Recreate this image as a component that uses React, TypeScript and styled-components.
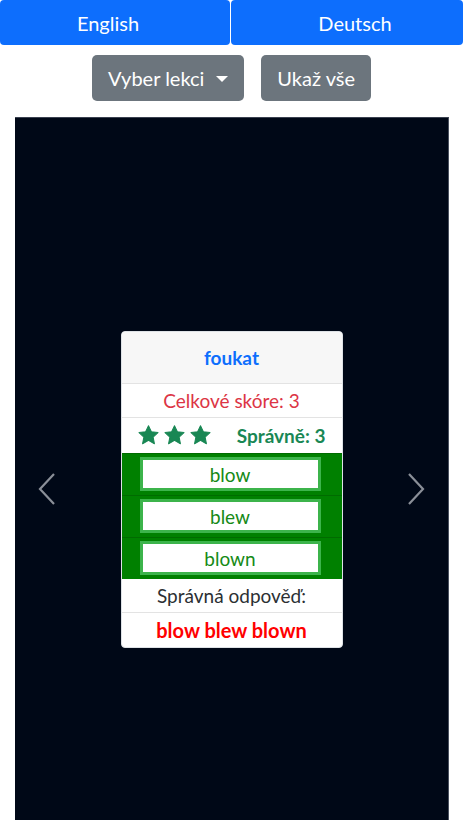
import React from "react";
import styled, { createGlobalStyle } from "styled-components";

const GlobalStyle = createGlobalStyle`
  body {
    margin: 0;
    background: #fff;
    font-family: Lato, "Noto Sans", sans-serif;
    color: #212529;
  }
  * { box-sizing: border-box; }
`;

const Page = styled.div`
  width: 463px;
  height: 820px;
  overflow: hidden;
  display: flex;
  flex-direction: column;
`;

const LangBar = styled.div`
  display: flex;
  gap: 1px;
`;

const LangButton = styled.button<{ $shift: number }>`
  flex: 1;
  height: 45px;
  border: none;
  border-radius: 4px;
  background: #0d6efd;
  color: #fff;
  font-family: inherit;
  font-size: 20px;
  padding: 0 0 0 ${({ $shift }) => ($shift > 0 ? $shift : 0)}px;
  padding-right: ${({ $shift }) => ($shift < 0 ? -$shift : 0)}px;
`;

const Toolbar = styled.div`
  display: flex;
  justify-content: center;
  gap: 17px;
  margin: 10px 0 16px;
`;

const GrayButton = styled.button`
  height: 46px;
  padding: 0 16px;
  border: none;
  border-radius: 5px;
  background: #6c757d;
  color: #fff;
  font-family: inherit;
  font-size: 20px;
  display: flex;
  align-items: center;
  gap: 12px;
`;

const Caret = styled.span`
  width: 0;
  height: 0;
  border-left: 6px solid transparent;
  border-right: 6px solid transparent;
  border-top: 6px solid #fff;
  margin-top: 2px;
`;

const Stage = styled.div`
  margin: 0 14px 0 15px;
  height: 743px;
  flex-shrink: 0;
  background: #000817;
  border-top: 1px solid #3a4150;
  border-right: 1px solid #4a5160;
  display: flex;
  align-items: center;
  justify-content: space-between;
  padding: 0 22px;
`;

const Chevron = styled.svg`
  width: 20px;
  height: 34px;
  flex-shrink: 0;
`;

const Card = styled.div`
  width: 222px;
  background: #fff;
  border-radius: 4px;
  overflow: hidden;
  border: 1px solid #dee2e6;
`;

const Header = styled.div`
  height: 52px;
  background: #f7f7f7;
  border-bottom: 1px solid #e3e3e3;
  display: flex;
  align-items: center;
  justify-content: center;
  color: #0d6efd;
  font-weight: 700;
  font-size: 19px;
`;

const Row = styled.div<{ $color?: string; $bold?: boolean }>`
  height: 34px;
  border-bottom: 1px solid #e3e3e3;
  display: flex;
  align-items: center;
  justify-content: center;
  color: ${({ $color }) => $color ?? "#2b2f33"};
  font-weight: ${({ $bold }) => ($bold ? 700 : 400)};
  font-size: ${({ $bold }) => ($bold ? 20 : 19)}px;
  &:last-child { border-bottom: none; }
`;

const ScoreRow = styled.div`
  height: 35px;
  display: flex;
  align-items: center;
  justify-content: space-between;
  padding: 0 16px;
  color: #198754;
  font-weight: 700;
  font-size: 19px;
`;

const Stars = styled.div`
  display: flex;
  gap: 5px;
`;

const AnswerRow = styled.div`
  height: 42px;
  background: #008000;
  border-top: 1px solid #006b00;
  display: flex;
  align-items: center;
  justify-content: center;
`;

const AnswerBox = styled.div`
  width: 181px;
  height: 34px;
  margin-left: -3px;
  background: #fff;
  border: 3px solid #3cb44b;
  display: flex;
  align-items: center;
  justify-content: center;
  color: #168a16;
  font-size: 19px;
  font-weight: 400;
`;

const Star = () => (
  <svg width="21" height="20" viewBox="0 0 24 23">
    <path
      d="M12 0.8l3.3 7 7.6 0.9-5.6 5.2 1.5 7.6L12 17.7l-6.8 3.8 1.5-7.6L1.1 8.7l7.6-0.9z"
      fill="#198754"
      stroke="#198754"
      strokeLinejoin="round"
      strokeWidth="1.2"
    />
  </svg>
);

const answers = ["blow", "blew", "blown"];

export default function App() {
  return (
    <Page>
      <GlobalStyle />
      <LangBar>
        <LangButton $shift={-14}>English</LangButton>
        <LangButton $shift={16}>Deutsch</LangButton>
      </LangBar>
      <Toolbar>
        <GrayButton>
          Vyber lekci <Caret />
        </GrayButton>
        <GrayButton>Ukaž vše</GrayButton>
      </Toolbar>
      <Stage>
        <Chevron viewBox="0 0 20 34">
          <path d="M17 2L3 17l14 15" fill="none" stroke="#8a8f98" strokeWidth="2.2" />
        </Chevron>
        <Card>
          <Header>foukat</Header>
          <Row $color="#dc3545">Celkové skóre: 3</Row>
          <ScoreRow>
            <Stars>
              <Star />
              <Star />
              <Star />
            </Stars>
            <span>Správně: 3</span>
          </ScoreRow>
          {answers.map((a) => (
            <AnswerRow key={a}>
              <AnswerBox>{a}</AnswerBox>
            </AnswerRow>
          ))}
          <Row>Správná odpověď:</Row>
          <Row $color="#ff0000" $bold>
            blow blew blown
          </Row>
        </Card>
        <Chevron viewBox="0 0 20 34">
          <path d="M3 2l14 15L3 32" fill="none" stroke="#8a8f98" strokeWidth="2.2" />
        </Chevron>
      </Stage>
    </Page>
  );
}
